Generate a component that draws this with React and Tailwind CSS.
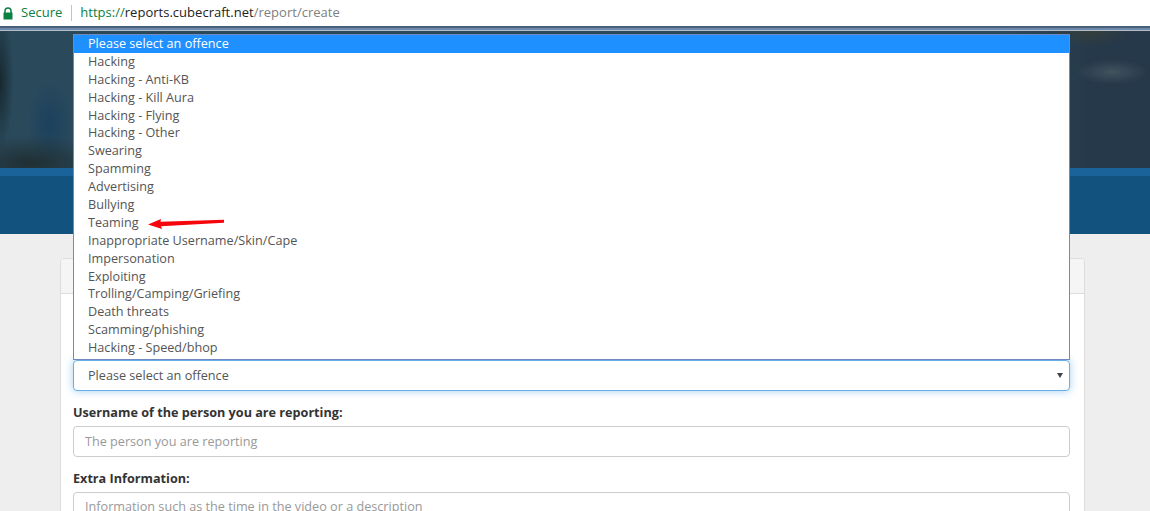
const offences = [
  'Please select an offence',
  'Hacking',
  'Hacking - Anti-KB',
  'Hacking - Kill Aura',
  'Hacking - Flying',
  'Hacking - Other',
  'Swearing',
  'Spamming',
  'Advertising',
  'Bullying',
  'Teaming',
  'Inappropriate Username/Skin/Cape',
  'Impersonation',
  'Exploiting',
  'Trolling/Camping/Griefing',
  'Death threats',
  'Scamming/phishing',
  'Hacking - Speed/bhop',
];

const AddressBar = () => (
  <div className="h-[26px] bg-white flex items-center font-['Open_Sans',sans-serif] text-[13px]">
    <svg className="ml-[2px] w-[12px] h-[13px]" viewBox="0 0 12 13">
      <path d="M3 6V4a3 3 0 0 1 6 0v2" fill="none" stroke="#0b8043" strokeWidth="1.5" />
      <rect x="1.5" y="5.5" width="9" height="7" fill="#0b8043" />
    </svg>
    <span className="ml-[7px] text-[#0b8043]">Secure</span>
    <span className="ml-[9px] w-px h-[16px] bg-[#c4c4c4]" />
    <span className="ml-[8px] tracking-[0.02px]">
      <span className="text-[#0b8043]">https://</span>
      <span className="text-[#222]">reports.cubecraft.net</span>
      <span className="text-[#808080]">/report/create</span>
    </span>
  </div>
);

const OffenceDropdown = () => (
  <ul className="absolute left-[73px] top-[34px] w-[997px] h-[326px] bg-white border border-[#7089c0] list-none m-0 p-0 overflow-hidden text-[12.65px] text-[#555]">
    {offences.map((offence, i) => (
      <li
        key={offence}
        className={`h-[17.9px] leading-[17.9px] pl-[14px] ${i === 0 ? 'bg-[#1e90ff] text-white' : ''}`}
      >
        {offence}
      </li>
    ))}
  </ul>
);

const TeamingArrow = () => (
  <svg className="absolute left-[146px] top-[216px]" width="80" height="14" viewBox="0 0 80 14">
    <path d="M2 8.5 L15 3 L14.5 5.8 L78 3.8 L78 6.8 L15 10.2 L16 13 Z" fill="#f5060c" />
  </svg>
);

export default function App() {
  return (
    <div className="relative w-[1150px] h-[511px] overflow-hidden bg-[#eeeeee] font-['Open_Sans',sans-serif]">
      <AddressBar />
      <div className="h-[2px] bg-[#4a6078]" />
      <div className="h-[3px] bg-[#6d89ac] border-b border-[#b5bcc6]" />

      {/* Hero */}
      <div className="h-[137px] bg-[#27404f] bg-[radial-gradient(ellipse_36px_12px_at_1112px_41px,#42525e,transparent),radial-gradient(ellipse_40px_16px_at_1090px_0px,#343f3c,transparent),radial-gradient(ellipse_80px_28px_at_30px_132px,#202f33,transparent),radial-gradient(ellipse_24px_44px_at_50px_92px,#1c415e,transparent),radial-gradient(ellipse_14px_70px_at_0px_50px,#17282f,transparent),linear-gradient(90deg,#2a4a5c_0px,#2a4a5c_1000px,#26394a_1090px),linear-gradient(180deg,#2a4a5c_0%,#243a49_100%)]" />
      <div className="h-[66px] bg-[#11527f] border-t-[8px] border-[#19639a]" />

      <div className="pt-[24px] px-[60px]">
        <div className="w-[1025px] h-[300px] bg-white border border-[#dddddd] rounded-[4px]">
          <div className="h-[35px] bg-[#f5f5f5] border-b border-[#dddddd] rounded-t-[4px]" />
          <div className="px-[12px] pt-[66px] text-[12.65px]">
            <div className="relative h-[31px] w-[997px] bg-white border border-[#66afe9] rounded-[4px] shadow-[0_0_8px_rgba(102,175,233,0.6)] flex items-center pl-[14px] text-[#555]">
              Please select an offence
              <span className="absolute right-[6px] top-[12px] w-0 h-0 border-x-[3px] border-x-transparent border-t-[5px] border-t-[#444]" />
            </div>

            <label className="block mt-[12px] leading-[18px] font-bold text-[#333]">
              Username of the person you are reporting:
            </label>
            <input
              readOnly
              placeholder="The person you are reporting"
              className="block mt-[5px] w-[997px] h-[31px] px-[11px] pb-[2px] border border-[#cccccc] rounded-[4px] placeholder:text-[#999] outline-none"
            />

            <label className="block mt-[12px] leading-[18px] font-bold text-[#333]">
              Extra Information:
            </label>
            <textarea
              readOnly
              placeholder="Information such as the time in the video or a description"
              className="block mt-[5px] w-[997px] h-[60px] px-[11px] py-[4px] border border-[#cccccc] rounded-[4px] placeholder:text-[#999] outline-none resize-none"
            />
          </div>
        </div>
      </div>

      <OffenceDropdown />
      <TeamingArrow />
    </div>
  );
}
